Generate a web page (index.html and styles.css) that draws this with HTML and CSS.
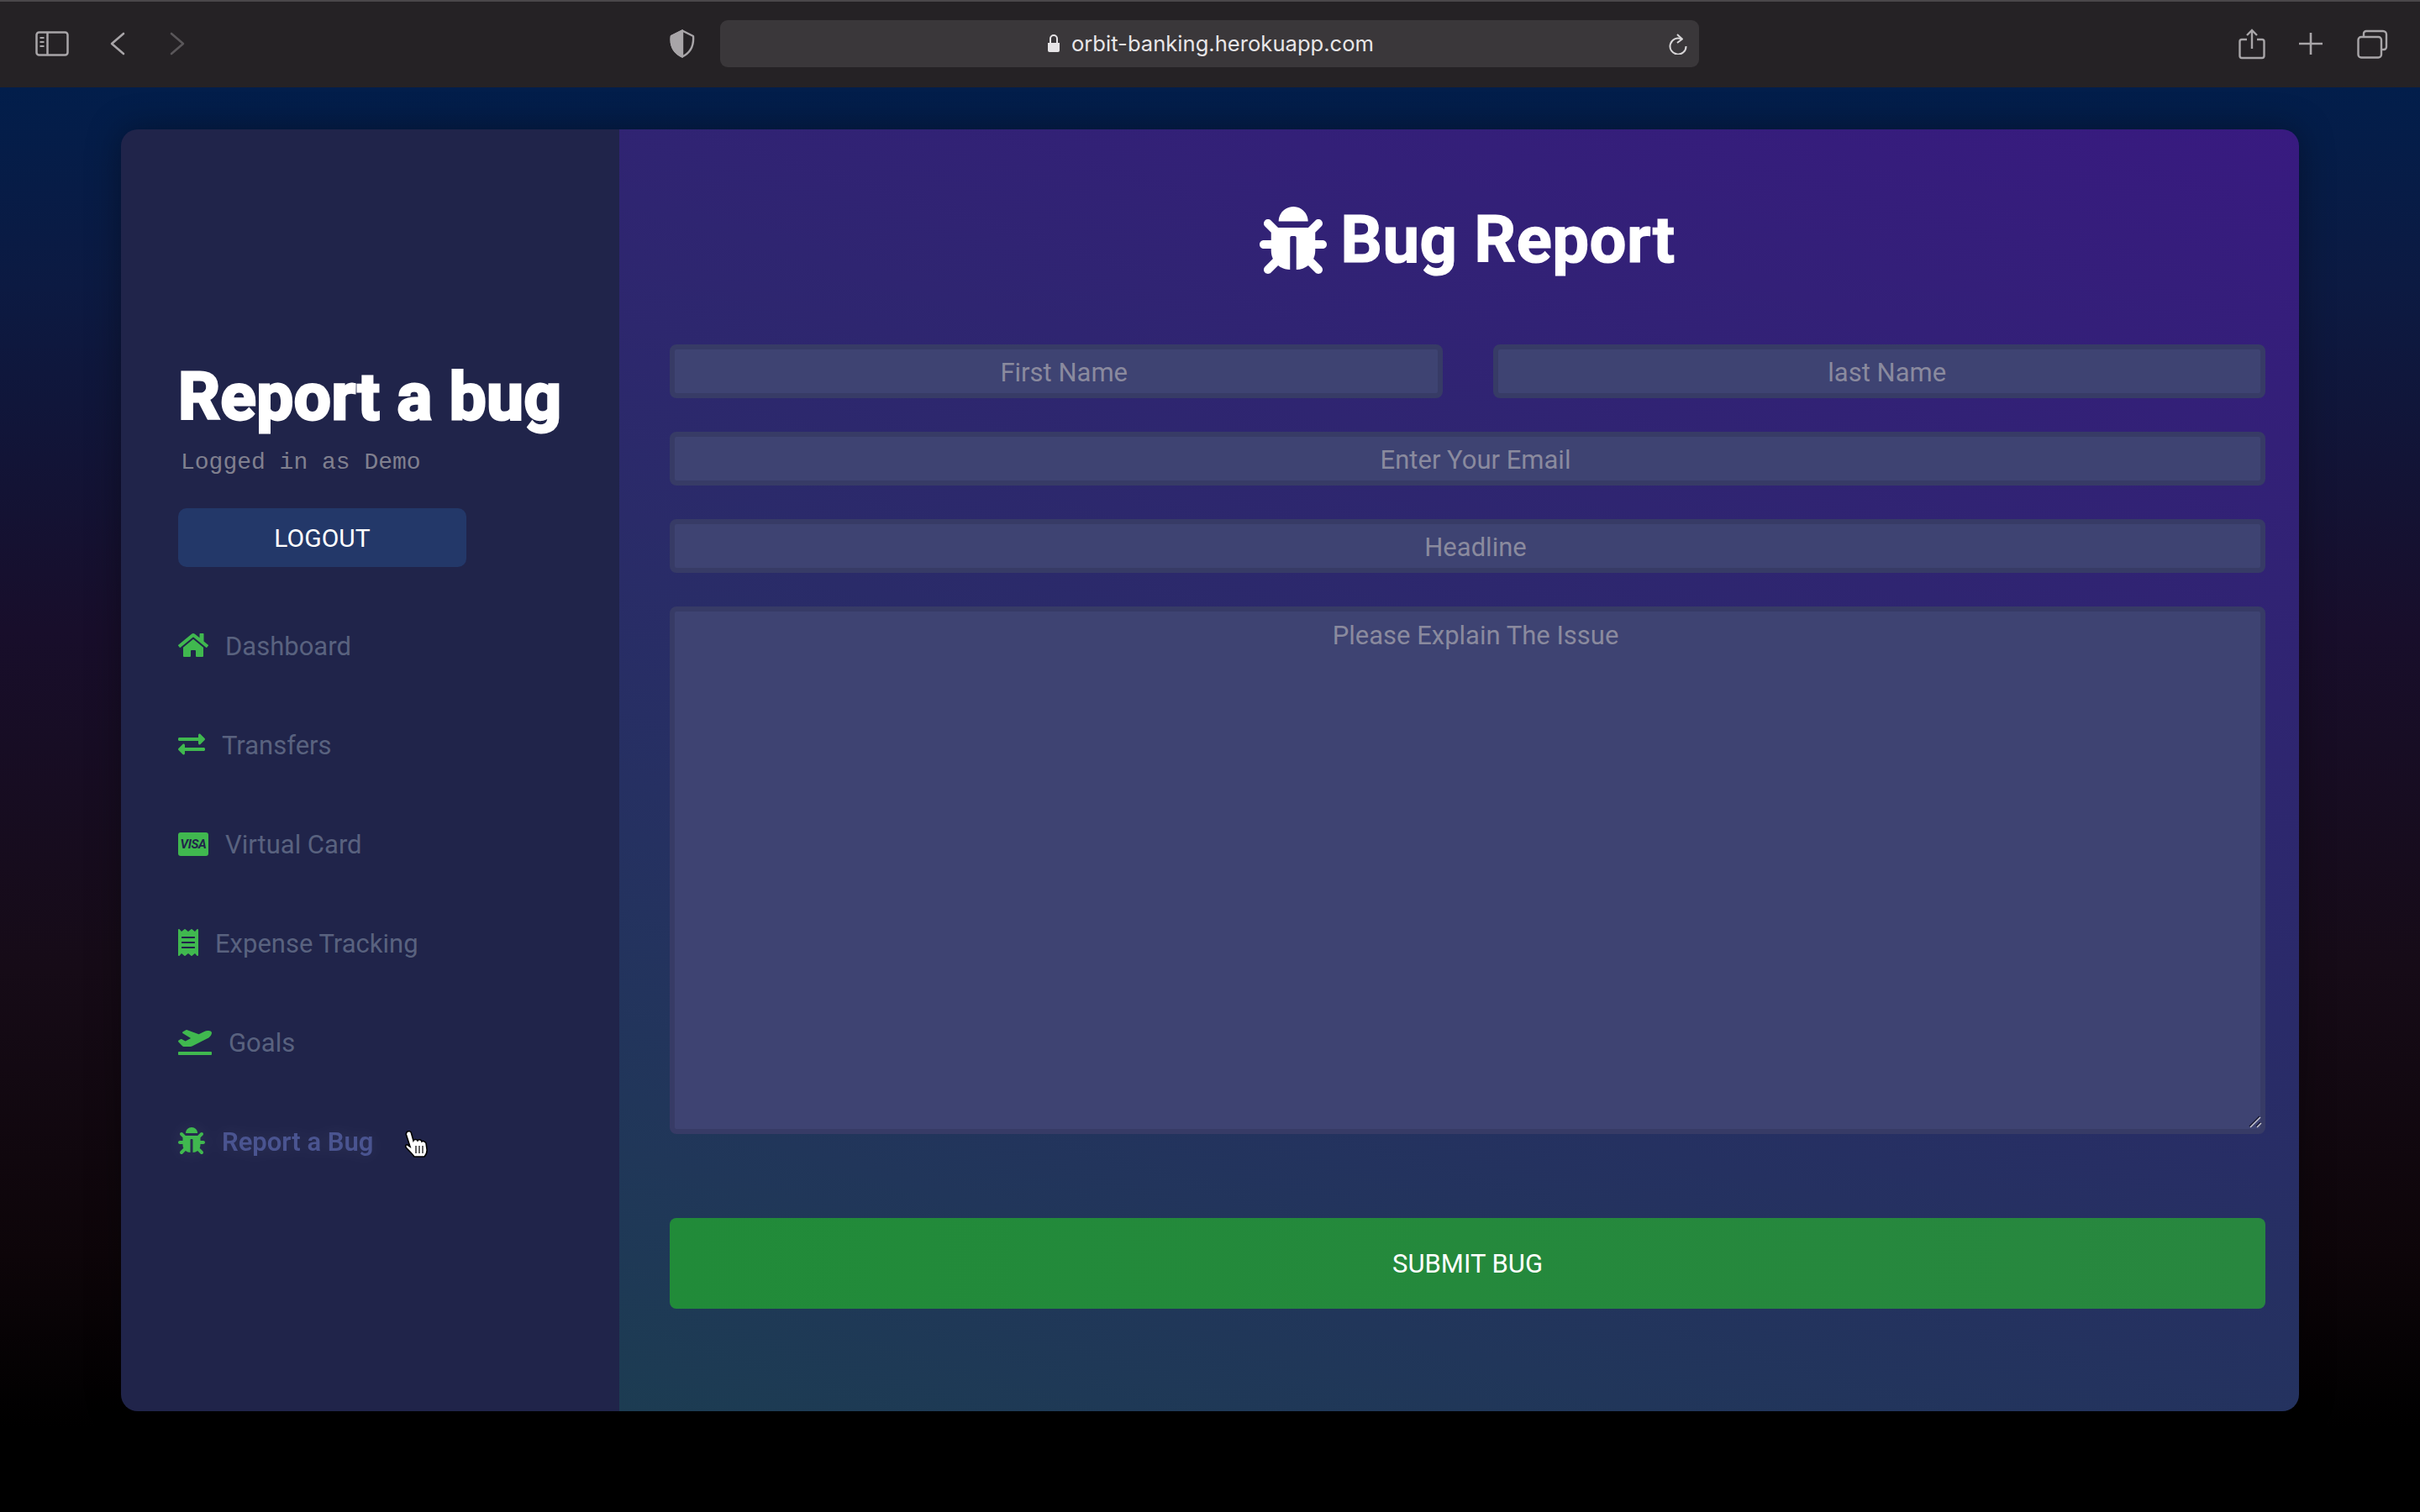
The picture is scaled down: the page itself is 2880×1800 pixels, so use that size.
FILE: index.html
```html
<!DOCTYPE html>
<html lang="en">
<head>
  <meta charset="UTF-8" />
  <title>Report a bug</title>
  <link rel="stylesheet" href="styles.css">
</head>
<body>

<header class="toolbar">
  <svg class="tb-sidebar" viewBox="0 0 40 30" fill="none" stroke="#a8a5a8" stroke-width="2.5"><rect x="1.5" y="1.5" width="37" height="27" rx="3"/><path d="M14.5 2v26"/><path d="M5.5 8h5M5.5 13h5M5.5 18h5" stroke-width="2.2"/></svg>
  <svg class="tb-back" viewBox="0 0 18 28" fill="none" stroke="#a8a5a8" stroke-width="2.6" stroke-linecap="round" stroke-linejoin="round"><path d="M16 2 2 14l14 12"/></svg>
  <svg class="tb-forward" viewBox="0 0 18 28" fill="none" stroke="#5a575a" stroke-width="2.6" stroke-linecap="round" stroke-linejoin="round"><path d="M2 2l14 12L2 26"/></svg>
  <svg class="tb-shield" viewBox="0 0 30 34" fill="none" stroke="#a8a5a8" stroke-width="2.4" stroke-linejoin="round"><path d="M15 1.500 28 8c.8 10-1.500 19-13 24.500C3.500 27 .7 18 2 8Z"/><path d="M15 1.500 2 8c-1.300 10 1.500 19 13 24.500Z" fill="#a8a5a8"/></svg>
  <div class="urlbar">
    <span></span>
    <div class="url">
      <svg class="url-lock" viewBox="0 0 14 21" fill="#e6e4e6"><path d="M0 10h14v9a2 2 0 0 1-2 2H2a2 2 0 0 1-2-2Z"/><path d="M3 10V5a4 4 0 0 1 8 0v5" fill="none" stroke="#e6e4e6" stroke-width="2"/></svg>
      orbit-banking.herokuapp.com
    </div>
    <svg class="url-reload" viewBox="0 0 24 25" fill="none" stroke="#d8d6d8" stroke-width="2"><path d="M16 6.500A9.500 9.500 0 1 0 21.500 15"/><path d="M11 1l6 5.500-6 4.500" stroke-linejoin="round"/></svg>
  </div>
  <svg class="tb-share" viewBox="0 0 32 37" fill="none" stroke="#a8a5a8" stroke-width="2.4"><path d="M10 13H4a2.500 2.500 0 0 0-2.500 2.500v17A2.500 2.500 0 0 0 4 35h24a2.500 2.500 0 0 0 2.500-2.500v-17A2.500 2.500 0 0 0 28 13h-6"/><path d="M16 24V2M10 8l6-6 6 6"/></svg>
  <svg class="tb-plus" viewBox="0 0 28 26" fill="none" stroke="#a8a5a8" stroke-width="2.6"><path d="M14 0v26M0 13h28"/></svg>
  <svg class="tb-tabs" viewBox="0 0 37 35" fill="none" stroke="#a8a5a8" stroke-width="2.4"><path d="M8 9V5a3 3 0 0 1 3-3h20a4 4 0 0 1 4 4v15a3 3 0 0 1-3 3h-3"/><rect x="1.500" y="9" width="27.500" height="24.500" rx="3.500"/></svg>
</header>

<main class="page">
  <div class="card">
    <aside class="sidebar">
      <h1 class="side-title">Report a bug</h1>
      <p class="side-user">Logged in as Demo</p>
      <button class="logout" type="button">LOGOUT</button>
      <ul class="nav">
        <li>
          <a class="nav-link" href="#">
            <svg class="nav-icon" viewBox="0 0 576 512"><path d="M280.37 148.26L96 300.11V464a16 16 0 0 0 16 16l112.06-.29a16 16 0 0 0 15.92-16V368a16 16 0 0 1 16-16h64a16 16 0 0 1 16 16v95.64a16 16 0 0 0 16 16.05L464 480a16 16 0 0 0 16-16V300L295.67 148.26a12.19 12.19 0 0 0-15.3 0zM571.6 251.47L488 182.56V44.05a12 12 0 0 0-12-12h-56a12 12 0 0 0-12 12v72.61L318.47 43a48 48 0 0 0-61 0L4.34 251.47a12 12 0 0 0-1.6 16.9l25.5 31A12 12 0 0 0 45.15 301l235.22-193.74a12.19 12.19 0 0 1 15.3 0L530.9 301a12 12 0 0 0 16.9-1.6l25.5-31a12 12 0 0 0-1.7-16.93z"/></svg>Dashboard
          </a>
        </li>
        <li>
          <a class="nav-link" href="#">
            <svg class="nav-icon" viewBox="0 0 512 512"><path d="M0 168v-16c0-13.255 10.745-24 24-24h360V80c0-21.367 25.899-32.042 40.971-16.971l80 80c9.372 9.373 9.372 24.569 0 33.941l-80 80C409.956 271.982 384 261.456 384 240v-48H24c-13.255 0-24-10.745-24-24zm488 152H128v-48c0-21.314-25.862-32.08-40.971-16.971l-80 80c-9.372 9.373-9.372 24.569 0 33.941l80 80C102.057 463.997 128 453.437 128 432v-48h360c13.255 0 24-10.745 24-24v-16c0-13.255-10.745-24-24-24z"/></svg>Transfers
          </a>
        </li>
        <li>
          <a class="nav-link" href="#"><span class="visa">VISA</span>Virtual Card</a>
        </li>
        <li>
          <a class="nav-link" href="#">
            <svg class="nav-icon" viewBox="0 0 384 512"><path d="M358.4 3.2L320 48 265.6 3.2a15.9 15.9 0 0 0-19.2 0L192 48 137.6 3.2a15.9 15.9 0 0 0-19.2 0L64 48 25.6 3.2C15-4.7 0 2.8 0 16v480c0 13.2 15 20.7 25.6 12.8L64 464l54.4 44.8a15.9 15.9 0 0 0 19.2 0L192 464l54.4 44.8a15.9 15.9 0 0 0 19.2 0L320 464l38.4 44.8c10.5 7.9 25.6.4 25.6-12.8V16c0-13.2-15-20.7-25.6-12.8zM320 360c0 4.4-3.6 8-8 8H72c-4.4 0-8-3.6-8-8v-16c0-4.4 3.6-8 8-8h240c4.4 0 8 3.6 8 8v16zm0-96c0 4.4-3.6 8-8 8H72c-4.4 0-8-3.6-8-8v-16c0-4.4 3.6-8 8-8h240c4.4 0 8 3.6 8 8v16zm0-96c0 4.4-3.6 8-8 8H72c-4.4 0-8-3.6-8-8v-16c0-4.4 3.6-8 8-8h240c4.4 0 8 3.6 8 8v16z"/></svg>Expense Tracking
          </a>
        </li>
        <li>
          <a class="nav-link" href="#">
            <svg class="nav-icon" viewBox="0 0 640 512"><path d="M624 448H16c-8.84 0-16 7.16-16 16v32c0 8.84 7.16 16 16 16h608c8.84 0 16-7.16 16-16v-32c0-8.84-7.16-16-16-16zM80.55 341.27c6.28 6.84 15.1 10.72 24.33 10.71l130.54-.18a65.62 65.62 0 0 0 29.64-7.12l290.96-147.65c26.74-13.57 50.71-32.94 67.02-58.31 18.31-28.48 20.3-49.09 13.07-63.65-7.21-14.57-24.74-25.27-58.25-27.45-29.85-1.94-59.54 5.92-86.28 19.48l-98.51 49.99-218.7-82.06a17.799 17.799 0 0 0-18-1.11L90.62 67.29c-10.67 5.41-13.25 19.65-5.17 28.53l156.22 98.1-103.21 52.38-72.35-36.47a17.804 17.804 0 0 0-16.07.02L9.91 230.22c-10.44 5.3-13.19 19.12-5.57 28.08l76.21 82.97z"/></svg>Goals
          </a>
        </li>
        <li class="nav-last">
          <a class="nav-link active" href="#">
            <svg class="nav-icon" viewBox="0 0 512 512"><path d="M511.988 288.9c-.478 17.43-15.217 31.1-32.653 31.1H424v16c0 21.864-4.882 42.584-13.6 61.145l60.228 60.228c12.496 12.497 12.496 32.758 0 45.255-12.498 12.497-32.759 12.496-45.256 0l-54.736-54.736C345.886 467.965 314.351 480 280 480V236c0-6.627-5.373-12-12-12h-24c-6.627 0-12 5.373-12 12v244c-34.351 0-65.886-12.035-90.636-32.108l-54.736 54.736c-12.498 12.497-32.759 12.496-45.256 0-12.496-12.497-12.496-32.758 0-45.255l60.228-60.228C92.882 378.584 88 357.864 88 336v-16H32.666C15.23 320 .491 306.33.013 288.9-.484 270.816 14.028 256 32 256h56v-58.745l-46.628-46.628c-12.496-12.497-12.496-32.758 0-45.255 12.498-12.497 32.758-12.497 45.256 0L141.255 160h229.489l54.627-54.627c12.498-12.497 32.758-12.497 45.256 0 12.496 12.497 12.496 32.758 0 45.255L424 197.255V256h56c17.972 0 32.484 14.816 31.988 32.9zM257 0c-61.856 0-112 50.144-112 112h224C369 50.144 318.856 0 257 0z"/></svg>Report a Bug
          </a>
          <svg class="hand" viewBox="0 0 29 32"><path d="M5 1C7 0 9 1 9.500 3L12 12C13 10 16 10 17 12 18 10 21 10.500 22 13 23 12 26 12.500 27 15L28 22C28.500 26 27 29 25 31H13C11 28 8 25 4 21 2 19 2.500 16 5 17L8 19 3.500 5C3 3 3.500 2 5 1Z" fill="#fff" stroke="#000" stroke-width="1.600"/><path d="M15 18v9M19 18v9M23 18v9" stroke="#333" stroke-width="1.500"/></svg>
        </li>
      </ul>
    </aside>

    <section class="content">
      <h2 class="content-title">
        <svg class="title-icon" viewBox="0 0 512 512"><path d="M511.988 288.9c-.478 17.43-15.217 31.1-32.653 31.1H424v16c0 21.864-4.882 42.584-13.6 61.145l60.228 60.228c12.496 12.497 12.496 32.758 0 45.255-12.498 12.497-32.759 12.496-45.256 0l-54.736-54.736C345.886 467.965 314.351 480 280 480V236c0-6.627-5.373-12-12-12h-24c-6.627 0-12 5.373-12 12v244c-34.351 0-65.886-12.035-90.636-32.108l-54.736 54.736c-12.498 12.497-32.759 12.496-45.256 0-12.496-12.497-12.496-32.758 0-45.255l60.228-60.228C92.882 378.584 88 357.864 88 336v-16H32.666C15.23 320 .491 306.33.013 288.9-.484 270.816 14.028 256 32 256h56v-58.745l-46.628-46.628c-12.496-12.497-12.496-32.758 0-45.255 12.498-12.497 32.758-12.497 45.256 0L141.255 160h229.489l54.627-54.627c12.498-12.497 32.758-12.497 45.256 0 12.496 12.497 12.496 32.758 0 45.255L424 197.255V256h56c17.972 0 32.484 14.816 31.988 32.9zM257 0c-61.856 0-112 50.144-112 112h224C369 50.144 318.856 0 257 0z"/></svg>
        Bug Report
      </h2>
      <form class="bug-form" onsubmit="return false;">
        <div class="name-row">
          <input class="field" type="text" placeholder="First Name" />
          <input class="field" type="text" placeholder="last Name" />
        </div>
        <input class="field" type="email" placeholder="Enter Your Email" />
        <input class="field" type="text" placeholder="Headline" />
        <div class="area-wrap">
          <textarea class="field field-area" placeholder="Please Explain The Issue"></textarea>
          <svg class="grabber" viewBox="0 0 16 16" fill="none" stroke-width="1.400"><path d="M1 14 13 2" stroke="#15152a"/><path d="M2 15 14 3" stroke="#c9c9d2"/><path d="M9 14 14 9" stroke="#15152a"/><path d="M10 15 15 10" stroke="#c9c9d2"/></svg>
        </div>
        <button class="submit" type="submit">SUBMIT BUG</button>
      </form>
    </section>
  </div>
</main>

</body>
</html>
```

FILE: styles.css
```css
* {
  box-sizing: border-box;
}
html, body {
  margin: 0;
  padding: 0;
  height: 100%;
  background: #000;
  font-family: Roboto, sans-serif;
  overflow: hidden;
}

/* browser bar */
.toolbar {
  display: flex;
  align-items: center;
  height: 104px;
  padding: 0 0 2px 42px;
  background: #252225;
  border-top: 2px solid #4a474a;
}
.toolbar svg {
  flex-shrink: 0;
}
.tb-sidebar { width: 40px; height: 30px; }
.tb-back { width: 18px; height: 28px; margin-left: 49px; }
.tb-forward { width: 18px; height: 28px; margin-left: 53px; }
.tb-shield { width: 30px; height: 34px; margin-left: 577px; }
.urlbar {
  display: grid;
  grid-template-columns: 1fr auto 1fr;
  align-items: center;
  width: 1165px;
  height: 56px;
  margin-left: 30px;
  padding: 0 13px 0 16px;
  background: #3a373a;
  border-radius: 9px;
}
.url {
  display: flex;
  align-items: center;
  gap: 14px;
  padding-bottom: 2px;
  font-family: Inter, sans-serif;
  font-size: 25.600px;
  color: #e8e6e8;
}
.url-lock { width: 14px; height: 21px; }
.url-reload { width: 24px; height: 25px; justify-self: end; }
.tb-share { width: 32px; height: 37px; margin-left: 642px; }
.tb-plus { width: 28px; height: 26px; margin-left: 40px; }
.tb-tabs { width: 37px; height: 35px; margin-left: 41px; }

/* page */
.page {
  height: 1696px;
  padding: 50px 144px 0;
  background: linear-gradient(180deg, #021e4b 0%, #0c1a42 14%, #180e2b 38%, #160b17 62%, #0d0509 82%, #000 94%);
}
.card {
  display: flex;
  height: 1526px;
  border-radius: 20px;
  overflow: hidden;
  box-shadow: 0 0 40px rgba(0, 0, 0, 0.35);
}

/* sidebar */
.sidebar {
  width: 593px;
  flex-shrink: 0;
  padding: 279px 0 0 68px;
  background: #20244a;
}
.side-title {
  margin: 0;
  font-size: 78px;
  line-height: 80px;
  font-weight: 700;
  letter-spacing: 0.6px;
  -webkit-text-stroke: 3px #fff;
  color: #fff;
  white-space: nowrap;
}
.side-user {
  margin: 21px 0 0 3px;
  font-family: "Liberation Mono", monospace;
  font-size: 28px;
  line-height: 34px;
  color: #80808f;
}
.logout {
  display: block;
  width: 343px;
  height: 70px;
  margin-top: 37px;
  padding-top: 2px;
  border: none;
  border-radius: 10px;
  background: #233869;
  color: #fff;
  font-family: Roboto, sans-serif;
  font-size: 30px;
}
.nav {
  list-style: none;
  margin: 0;
  padding: 0;
}
.nav li {
  height: 38px;
  margin-top: 80px;
  line-height: 38px;
}
.nav li:first-child {
  margin-top: 76px;
}
.nav-last {
  position: relative;
}
.nav-link {
  display: inline-block;
  font-size: 31px;
  color: #59627f;
  text-decoration: none;
  white-space: nowrap;
}
.nav-icon {
  height: 32px;
  margin-right: 20px;
  fill: #40b84f;
  vertical-align: -4px;
}
.visa {
  display: inline-block;
  overflow: hidden;
  width: 36px;
  height: 28px;
  margin-right: 20px;
  border-radius: 3px;
  background: #40b84f;
  color: #20244a;
  font-family: Roboto, sans-serif;
  font-size: 15px;
  font-weight: 700;
  font-style: italic;
  letter-spacing: -0.4px;
  line-height: 28px;
  text-align: center;
  vertical-align: -3px;
}
.nav-link.active {
  color: #4a5490;
  font-weight: 600;
  filter: drop-shadow(0 0 10px rgba(255, 255, 255, 0.08));
}
.hand {
  position: absolute;
  left: 268px;
  top: 5px;
  width: 29px;
  height: 32px;
}

/* main panel */
.content {
  flex: 1;
  padding: 92px 40px 0 60px;
  background: linear-gradient(17deg, #1c3c52 0%, #381a80 100%);
}
.content-title {
  margin: 0;
  height: 80px;
  display: flex;
  align-items: center;
  justify-content: center;
  gap: 16px;
  font-size: 78px;
  line-height: 80px;
  font-weight: 700;
  letter-spacing: 0.4px;
  -webkit-text-stroke: 1.200px #fff;
  color: #fff;
}
.title-icon {
  width: 80px;
  height: 80px;
  fill: #fff;
}
.bug-form {
  display: flex;
  flex-direction: column;
  gap: 40px;
  margin-top: 84px;
}
.name-row {
  display: grid;
  grid-template-columns: 1fr 1fr;
  gap: 60px;
}
.field {
  display: block;
  width: 100%;
  height: 64px;
  padding: 3px 0 0 19px;
  border: 6px solid #373b66;
  border-radius: 8px;
  outline: none;
  background: #3e4372;
  color: #fff;
  font-family: Roboto, sans-serif;
  font-size: 31px;
  text-align: center;
}
.field::placeholder {
  color: #8a8a9e;
  opacity: 1;
}
.area-wrap {
  position: relative;
}
.field-area {
  height: 628px;
  padding-top: 10px;
  line-height: 38px;
  resize: none;
}
.grabber {
  position: absolute;
  right: 4px;
  bottom: 7px;
  width: 16px;
  height: 16px;
}
.submit {
  height: 108px;
  margin-top: 60px;
  border: none;
  border-radius: 8px;
  background: linear-gradient(90deg, #218b39, #28873f);
  color: #fff;
  font-family: Roboto, sans-serif;
  font-size: 31px;
}
```
